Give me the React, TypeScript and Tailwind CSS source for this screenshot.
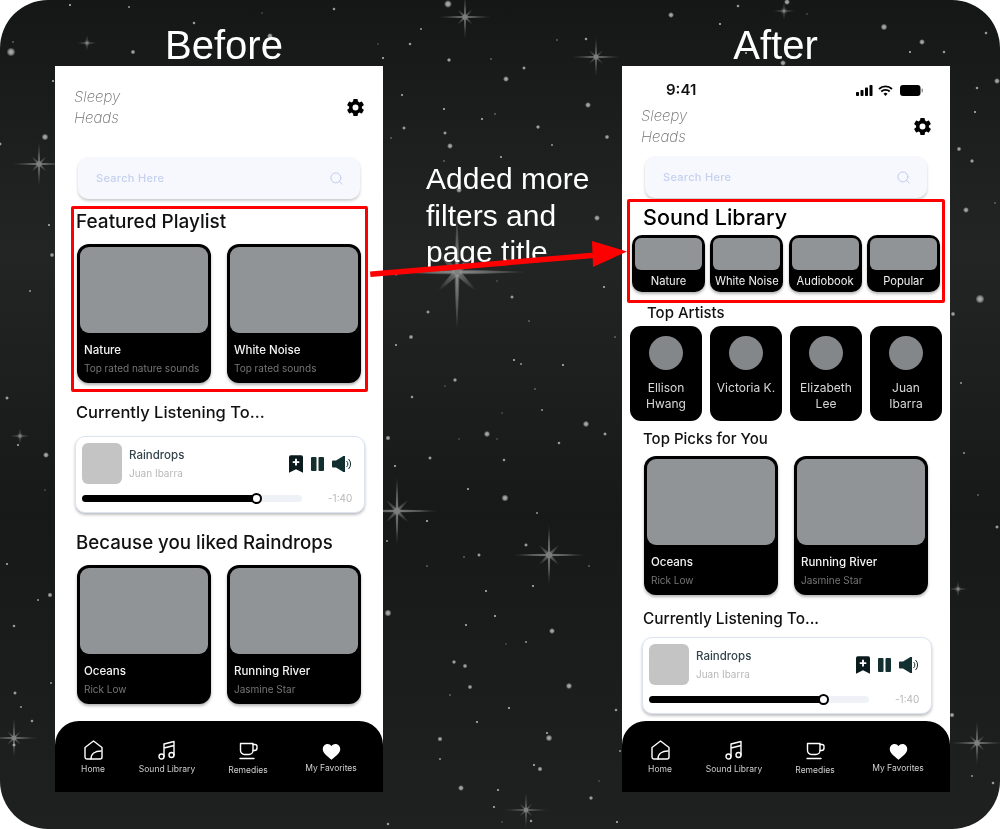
import { Search } from "lucide-react";
import { IoSettingsSharp } from "react-icons/io5";

// x, y, radius of the small stars in the background
const dots: number[][] = [
  [70,5,1.6],[129,7,1.2],[334,9,1.8],[262,13,.9],[194,23,1.8],[270,36,3],[11,52,4.5],[133,52,2.4],[13,42,1],
  [448,4,4],[421,29,1.2],[410,44,1.8],[378,44,.9],[383,58,1.6],[449,60,2.2],[491,59,1],[671,15,3],[738,6,1.8],
  [787,2,3],[807,14,.9],[720,24,1.6],[884,27,3.4],[986,33,1.8],[922,42,3],[910,52,1.6],[944,52,1.8],[586,39,1.8],
  [557,40,1],[783,63,3],[746,53,1.4],[524,68,2],[506,79,3],[402,95,1.4],[588,105,3],[444,109,1.6],[482,119,1.6],
  [495,114,1],[404,128,2],[445,133,2],[538,127,2.2],[607,137,2.4],[391,138,1],[450,146,3],[552,145,1.2],
  [501,157,1.4],[444,161,1],[459,190,3],[597,218,3],[497,281,.9],[396,274,2],[604,287,1.6],[512,297,2],
  [428,312,2],[529,321,1],[411,337,2.4],[615,337,1],[396,345,1.4],[514,360,1.6],[521,364,1.2],[563,365,1.6],
  [455,380,2.2],[445,386,.9],[412,397,1.8],[535,389,1],[542,410,1.2],[502,413,.9],[586,424,3.2],[487,434,3.2],
  [605,434,2],[388,438,2.6],[459,439,.9],[497,439,.9],[559,443,1.8],[430,458,2],[504,460,1.8],[395,466,1.6],
  [468,489,1.4],[505,498,3.6],[537,513,1.2],[427,521,1.6],[387,541,1.2],[526,545,2],[479,555,2],[464,557,1],
  [427,566,1],[589,566,1],[533,586,1.6],[486,591,1.6],[388,613,3.6],[495,616,1.6],[466,625,1.6],[552,631,3],
  [506,644,.9],[526,642,1.2],[454,662,2.2],[465,666,2.4],[470,687,2.4],[569,686,3.2],[450,695,1],[509,708,1.6],
  [616,710,1.8],[477,722,1.6],[440,739,2.6],[549,738,3.4],[547,733,1.4],[440,759,1.2],[620,751,1.2],[534,765,1.6],
  [540,769,2.6],[599,781,.9],[461,788,3],[498,790,1.6],[591,798,2.2],[494,807,1.6],[531,821,1.8],[502,822,.9],
  [388,824,1.8],[617,822,1.6],[53,81,1.6],[45,137,3.4],[0,144,2],[49,225,1.6],[52,255,2.4],[30,291,1.2],[7,398,2],
  [18,445,1.4],[46,455,3],[45,490,.9],[7,564,1.4],[50,595,2.6],[38,600,1.2],[14,626,1.8],[51,683,1.2],[15,693,2],
  [21,707,1.2],[32,721,1.8],[14,745,2],[977,88,1.8],[997,81,3],[975,112,1.6],[959,149,2.4],[972,161,2.2],
  [966,210,3],[995,203,1],[980,299,4.6],[953,314,2.4],[961,383,1.2],[964,453,1.2],[978,495,1],[997,527,2],
  [952,715,2.6],[972,776,1.2],[993,783,1.8],
];

// x, y, arm length of the sparkles
const sparkles: number[][] = [
  [465,17,26],[596,57,24],[457,272,62],[397,511,38],[549,555,34],[526,810,22],[39,164,26],[14,738,24],
  [977,743,26],[87,43,10],[20,436,10],[784,11,11],[958,589,10],
];

function Sparkle({ x, y, r }: { x: number; y: number; r: number }) {
  const d = r * 0.42;
  const w = Math.max(1, r * 0.05);
  return (
    <g transform={`translate(${x} ${y})`} fill="url(#ray)" opacity=".7">
      <polygon points={`${-r * 1.2},0 0,${-w} ${r * 1.2},0 0,${w}`} />
      <polygon points={`0,${-r} ${w},0 0,${r} ${-w},0`} />
      <polygon opacity=".7" points={`${-d},${-d} ${w * 0.7},${-w * 0.7} ${d},${d} ${-w * 0.7},${w * 0.7}`} />
      <polygon opacity=".7" points={`${d},${-d} ${w * 0.7},${w * 0.7} ${-d},${d} ${-w * 0.7},${-w * 0.7}`} />
      <circle r={Math.min(3, r * 0.1)} fill="#a8a8a8" />
    </g>
  );
}

function StarField() {
  return (
    <svg className="absolute inset-0" width="1000" height="829" viewBox="0 0 1000 829">
      <defs>
        <radialGradient id="dot">
          <stop offset="0" stopColor="#b4b4b4" />
          <stop offset=".5" stopColor="#8f8f8f" />
          <stop offset="1" stopColor="#8f8f8f" stopOpacity="0" />
        </radialGradient>
        <radialGradient id="ray">
          <stop offset="0" stopColor="#d0d0d0" />
          <stop offset=".5" stopColor="#bdbdbd" stopOpacity=".55" />
          <stop offset="1" stopColor="#bdbdbd" stopOpacity="0" />
        </radialGradient>
        <filter id="soft" x="-20%" y="-20%" width="140%" height="140%">
          <feGaussianBlur stdDeviation=".5" />
        </filter>
      </defs>
      {dots.map(([x, y, r], i) => (
        <circle key={i} cx={x} cy={y} r={r} fill="url(#dot)" />
      ))}
      <g filter="url(#soft)">
        {sparkles.map(([x, y, r], i) => (
          <Sparkle key={i} x={x} y={y} r={r} />
        ))}
      </g>
    </svg>
  );
}

function Brand({ className }: { className: string }) {
  return (
    <div className={`flex items-center justify-between pl-[19px] pr-[18px] ${className}`}>
      <p className="text-[15px] leading-[21px] font-extralight italic text-[#6f6f6f]">
        Sleepy
        <br />
        Heads
      </p>
      <IoSettingsSharp className="size-[19px] text-black" />
    </div>
  );
}

function SearchBar({ className }: { className: string }) {
  return (
    <div className={`ml-[23px] flex h-[42px] w-[282px] items-center justify-between rounded-[10px] bg-[#f7f8fe] pl-[18px] pr-[16px] shadow-[0_2px_3px_rgba(0,0,0,0.2)] ${className}`}>
      <span className="text-[11px] font-medium tracking-[0.3px] text-[#c4d0ee]">Search Here</span>
      <Search className="size-[15px] text-[#c0cdec]" strokeWidth={1.6} />
    </div>
  );
}

function Card({ title, sub }: { title: string; sub: string }) {
  return (
    <div className="h-[139px] w-[134px] rounded-[12px] bg-black p-[3px] shadow-[0_2px_3px_rgba(0,0,0,0.3)]">
      <div className="h-[86px] rounded-[9px] bg-[#909497]" />
      <p className="mt-[10px] pl-[4px] text-[11.500px] leading-[14px] font-medium text-[#f4f4f4]">{title}</p>
      <p className="mt-[5px] pl-[4px] text-[10px] leading-[13px] text-[#757575]">{sub}</p>
    </div>
  );
}

function FilterCard({ label }: { label: string }) {
  return (
    <div className="h-[57px] w-[73px] rounded-[10px] bg-black p-[3px] shadow-[0_2px_3px_rgba(0,0,0,0.3)]">
      <div className="h-[32px] rounded-[6px] bg-[#909497]" />
      <p className="mt-[3px] whitespace-nowrap text-center text-[11.200px] leading-[16px] text-[#f2f2f2]">{label}</p>
    </div>
  );
}

function ArtistCard({ first, last }: { first: string; last?: string }) {
  return (
    <div className="flex h-[95px] w-[72px] flex-col items-center rounded-[11px] bg-black pt-[10px]">
      <div className="size-[34px] rounded-full bg-[#83878a]" />
      <p className="mt-[10px] text-center text-[12px] leading-[16px] text-[#d8d8d8]">
        {first}
        {last && <br />}
        {last}
      </p>
    </div>
  );
}

function BookmarkPlus() {
  return (
    <svg width="14" height="18" viewBox="0 0 15 19">
      <path fillRule="evenodd" fill="#0b1a1c" d="M2 0h11a2 2 0 0 1 2 2v17l-7.500-4-7.500 4V2a2 2 0 0 1 2-2zM6.500 4v2.500H4v2h2.500V11h2V8.500H11v-2H8.500V4z" />
    </svg>
  );
}

function Pause() {
  return (
    <svg width="13" height="14" viewBox="0 0 13 14">
      <rect x="0" y="0" width="5.500" height="14" rx="1" fill="#12302f" />
      <rect x="7.500" y="0" width="5.500" height="14" rx="1" fill="#12302f" />
    </svg>
  );
}

function Speaker() {
  return (
    <svg width="19" height="16" viewBox="0 0 19 16">
      <path fill="#12302f" d="M0 5.500a1 1 0 0 1 1-1h3L11 .2A1 1 0 0 1 13 1v14a1 1 0 0 1-2 .8L4 11.500H1a1 1 0 0 1-1-1z" />
      <path fill="none" stroke="#12302f" strokeWidth="1" d="M14.500 5a4 4 0 0 1 0 6M16.500 3a7 7 0 0 1 0 10" />
    </svg>
  );
}

function Player({ className }: { className: string }) {
  return (
    <div className={`ml-[20px] h-[77px] w-[290px] rounded-[10px] border border-[#dce4f2] bg-white px-[6px] pt-[6px] shadow-[0_2px_3px_rgba(0,0,0,0.25)] ${className}`}>
      <div className="flex h-[41px] items-center">
        <div className="h-[41px] w-[40px] rounded-[6px] bg-[#c4c4c4]" />
        <div className="ml-[7px] flex-1">
          <p className="text-[11.500px] leading-[14px] font-medium text-[#33434a]">Raindrops</p>
          <p className="mt-[5px] text-[10px] leading-[13px] text-[#b8b8b8]">Juan Ibarra</p>
        </div>
        <div className="mr-[7px] flex items-center gap-[8px]">
          <BookmarkPlus />
          <Pause />
          <Speaker />
        </div>
      </div>
      <div className="mt-[8px] flex h-[12px] items-center">
        <div className="relative h-[7px] w-[220px] rounded-full bg-[#eef2f7]">
          <div className="h-full w-[175px] rounded-full bg-black" />
          <div className="absolute top-[-2px] left-[169px] size-[11px] rounded-full border-2 border-black bg-white" />
        </div>
        <span className="ml-[26px] text-[10px] text-[#b8b8b8]">-1:40</span>
      </div>
    </div>
  );
}

function NavItem({ label, shift, children }: { label: string; shift: string; children: React.ReactNode }) {
  return (
    <div className={`flex flex-col items-center ${shift}`}>
      <div className="flex h-[20px] items-center">{children}</div>
      <span className="mt-[4px] whitespace-nowrap text-[8.500px] leading-[11px] text-[#cfcfcf]">{label}</span>
    </div>
  );
}

function Nav() {
  return (
    <div className="mt-auto grid h-[71px] grid-cols-[76px_72px_90px_76px] rounded-t-[24px] bg-black pt-[19px]">
      <NavItem label="Home" shift="">
        <svg width="19" height="20" viewBox="0 0 19 20" fill="none" stroke="#fff" strokeWidth="1.4" strokeLinejoin="round" strokeLinecap="round">
          <path d="M1 7.500L9.500 1 18 7.500V17a2 2 0 0 1-2 2H3a2 2 0 0 1-2-2z" />
          <path d="M7 19c0-5 4-8 10-8" />
        </svg>
      </NavItem>
      <NavItem label="Sound Library" shift="">
        <svg width="18" height="20" viewBox="0 0 18 20" fill="none" stroke="#fff" strokeWidth="1.4" strokeLinecap="round" strokeLinejoin="round">
          <circle cx="3.500" cy="16.500" r="2.500" />
          <circle cx="13.500" cy="15" r="2.500" />
          <path d="M6 16.500V4l10-2.500V15M6 8l10-2.500" />
        </svg>
      </NavItem>
      <NavItem label="Remedies" shift="translate-y-px">
        <svg width="19" height="19" viewBox="0 0 19 19" fill="none" stroke="#fff" strokeWidth="1.4" strokeLinecap="round" strokeLinejoin="round">
          <path d="M1.500 1.500h12.500v7a4 4 0 0 1-4 4H5.500a4 4 0 0 1-4-4z" />
          <path d="M14 2.500h2a2 2 0 0 1 2 2V6a2.500 2.500 0 0 1-2.500 2.500H14" />
          <path d="M1 16.500h14" />
        </svg>
      </NavItem>
      <NavItem label="My Favorites" shift="-translate-y-px">
        <svg width="19" height="16" viewBox="0 0 24 22" fill="#fff" className="translate-y-[3px]">
          <path d="M12 21.500C5 16 0 12 0 6.800 0 3 3 0 6.600 0 8.800 0 10.800 1 12 2.800 13.200 1 15.200 0 17.400 0 21 0 24 3 24 6.800 24 12 19 16 12 21.500z" />
        </svg>
      </NavItem>
    </div>
  );
}

function StatusBar() {
  return (
    <div className="mt-[13px] flex h-[22px] items-center justify-between pl-[44px] pr-[27px]">
      <span className="text-[15px] font-semibold text-[#111]">9:41</span>
      <div className="flex items-center gap-[5px]">
        <svg width="17" height="11" viewBox="0 0 17 11" fill="#000">
          <rect x="0" y="7" width="3" height="4" rx=".8" />
          <rect x="4.500" y="5" width="3" height="6" rx=".8" />
          <rect x="9" y="2.500" width="3" height="8.500" rx=".8" />
          <rect x="13.500" y="0" width="3" height="11" rx=".8" />
        </svg>
        <svg width="15" height="11" viewBox="0 0 15 11" fill="none" stroke="#000" strokeWidth="1.800">
          <path d="M1 4a9.500 9.500 0 0 1 13 0M3.300 6.500a6 6 0 0 1 8.400 0" />
          <path d="M7.500 11L5.500 8.700a3 3 0 0 1 4 0z" fill="#000" stroke="none" />
        </svg>
        <svg width="23" height="11" viewBox="0 0 23 11" className="ml-[2px]">
          <rect x="0" y="0" width="20.500" height="11" rx="3" fill="#000" />
          <rect x="21.500" y="3.500" width="1.500" height="4" rx=".7" fill="#999" />
        </svg>
      </div>
    </div>
  );
}

function Heading({ text, className }: { text: string; className: string }) {
  return <h2 className={`font-medium text-[#111] ${className}`}>{text}</h2>;
}

function BeforePhone() {
  return (
    <div className="flex h-[726px] w-[328px] flex-col bg-white font-['Inter',sans-serif]">
      <Brand className="mt-[20px]" />
      <SearchBar className="mt-[29px]" />
      <section className="mt-[7px] ml-[16px] w-[297px] rounded-[2px] border-[3px] border-[#ff0000] pb-[6px] pl-[3px]">
        <Heading text="Featured Playlist" className="-ml-px text-[19px] leading-[26px]" />
        <div className="mt-[9px] flex gap-[16px]">
          <Card title="Nature" sub="Top rated nature sounds" />
          <Card title="White Noise" sub="Top rated sounds" />
        </div>
      </section>
      <Heading text="Currently Listening To..." className="mt-[9px] ml-[21px] text-[16.500px] leading-[22px]" />
      <Player className="mt-[13px]" />
      <Heading text="Because you liked Raindrops" className="mt-[17px] ml-[21px] text-[18.700px] leading-[26px]" />
      <div className="mt-[9px] ml-[22px] flex gap-[16px]">
        <Card title="Oceans" sub="Rick Low" />
        <Card title="Running River" sub="Jasmine Star" />
      </div>
      <Nav />
    </div>
  );
}

function AfterPhone() {
  return (
    <div className="flex h-[726px] w-[328px] flex-col bg-white font-['Inter',sans-serif]">
      <StatusBar />
      <Brand className="mt-[4px]" />
      <SearchBar className="mt-[9px]" />
      <section className="mt-[1px] ml-[5px] w-[318px] rounded-[2px] border-[3px] border-[#ff0000] pb-[8px] pl-[2px]">
        <Heading text="Sound Library" className="ml-[11px] text-[21.500px] leading-[30px] text-black" />
        <div className="mt-[3px] flex gap-[5.300px]">
          <FilterCard label="Nature" />
          <FilterCard label="White Noise" />
          <FilterCard label="Audiobook" />
          <FilterCard label="Popular" />
        </div>
      </section>
      <Heading text="Top Artists" className="ml-[25px] text-[15px] leading-[20px]" />
      <div className="mt-[3px] ml-[8px] flex gap-[8px]">
        <ArtistCard first="Ellison" last="Hwang" />
        <ArtistCard first="Victoria K." />
        <ArtistCard first="Elizabeth" last="Lee" />
        <ArtistCard first="Juan" last="Ibarra" />
      </div>
      <Heading text="Top Picks for You" className="mt-[8px] ml-[21px] text-[15px] leading-[20px]" />
      <div className="mt-[7px] ml-[22px] flex gap-[16px]">
        <Card title="Oceans" sub="Rick Low" />
        <Card title="Running River" sub="Jasmine Star" />
      </div>
      <Heading text="Currently Listening To..." className="mt-[14px] ml-[21px] text-[15.400px] leading-[20px]" />
      <Player className="mt-[8px]" />
      <Nav />
    </div>
  );
}

export default function App() {
  return (
    <div className="h-[829px] w-[1000px] bg-white">
      <div className="relative h-[829px] overflow-hidden rounded-[48px] bg-[linear-gradient(180deg,#151616_0%,#232424_30%,#171818_62%,#1f2020_100%)]">
        <StarField />
        <div className="relative flex pl-[55px] font-['Liberation_Sans',sans-serif] text-white">
          <div className="w-[328px]">
            <h1 className="h-[66px] pt-[24px] pl-[10px] text-center text-[40px] leading-[43px]">Before</h1>
            <BeforePhone />
          </div>
          <div className="w-[239px] pt-[161px] pl-[43px] text-[30px] leading-[36.500px]">
            Added more
            <br />
            filters and
            <br />
            page title
          </div>
          <div className="w-[328px]">
            <h1 className="h-[66px] pt-[24px] pr-[21px] text-center text-[40px] leading-[43px]">After</h1>
            <AfterPhone />
          </div>
        </div>
        {/* arrow sits over both phones */}
        <svg className="absolute inset-0" width="1000" height="829" viewBox="0 0 1000 829">
          <path d="M370 271.500L594 252.500L594.500 258L370.500 277z" fill="#ff0000" />
          <path d="M592 241L627 251.500L593 267z" fill="#ff0000" />
        </svg>
      </div>
    </div>
  );
}
